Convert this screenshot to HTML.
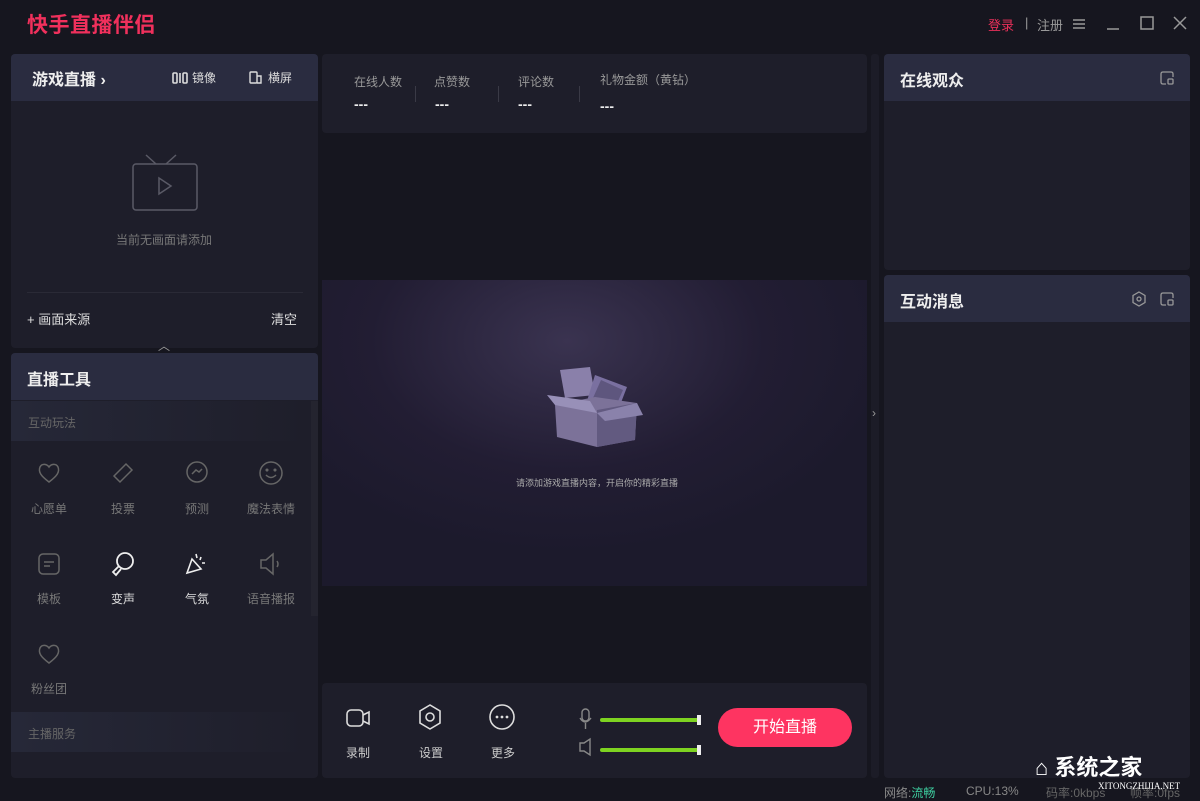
<!DOCTYPE html>
<html><head><meta charset="utf-8"><style>
*{margin:0;padding:0;box-sizing:border-box}
body{width:1200px;height:801px;background:#16161f;font-family:"Liberation Sans","Noto Sans CJK SC",sans-serif;color:#ccc;position:relative;overflow:hidden}
.a{position:absolute}
.panel{position:absolute;background:#1e1e2a;border-radius:4px;overflow:hidden}
.hd{position:absolute;left:0;right:0;top:0;height:47px;background:#2a2c40}
.t{font-size:16px;font-weight:bold;color:#eee}
.s{font-size:12px;color:#888}
svg{position:absolute;fill:none}
.tool{position:absolute;width:74px;text-align:center;font-size:12px;color:#777}
</style></head><body>
<div class="a" style="left:27px;top:9px;font-size:21px;font-weight:bold;color:#f0305c;letter-spacing:0.5px">快手直播伴侣</div>
<div class="a" style="left:988px;top:15px;font-size:13px;color:#e8305a">登录</div>
<div class="a" style="left:1025px;top:15px;font-size:13px;color:#999">|</div>
<div class="a" style="left:1037px;top:15px;font-size:13px;color:#999">注册</div>
<svg style="left:1072px;top:17px" width="14" height="14" stroke="#999" stroke-width="1.5"><path d="M1 3H13M1 7H13M1 11H13"/></svg>
<svg style="left:1106px;top:17px" width="14" height="14" stroke="#999" stroke-width="1.5"><path d="M1 12H13"/></svg>
<svg style="left:1140px;top:16px" width="14" height="14" stroke="#999" stroke-width="1.5"><rect x="1" y="1" width="12" height="12"/></svg>
<svg style="left:1173px;top:16px" width="14" height="14" stroke="#999" stroke-width="1.5"><path d="M1 1L13 13M13 1L1 13"/></svg>

<!-- left top -->
<div class="panel" style="left:11px;top:54px;width:307px;height:294px">
<div class="hd"></div>
<div class="a t" style="left:21px;top:12px">游戏直播 ›</div>
<svg style="left:161px;top:18px" width="16" height="12" stroke="#ddd" stroke-width="1.6"><rect x="1" y="1" width="4" height="10" rx="1"/><path d="M8 1V11"/><rect x="11" y="1" width="4" height="10" rx="1"/></svg>
<div class="a" style="left:181px;top:15px;font-size:12px;color:#ddd">镜像</div>
<svg style="left:238px;top:17px" width="13" height="13" stroke="#ddd" stroke-width="1.4"><rect x="1" y="1" width="7" height="11" rx="1"/><path d="M8 5H12V12H8"/></svg>
<div class="a" style="left:257px;top:15px;font-size:12px;color:#ddd">横屏</div>
<svg style="left:120px;top:98px" width="70" height="62" stroke="#5a5a66" stroke-width="1.5"><path d="M15 3L25 12M45 3L35 12"/><rect x="2" y="12" width="64" height="46" rx="3"/><path d="M28 26L28 42L40 34Z"/></svg>
<div class="a s" style="left:105px;top:177px;color:#777">当前无画面请添加</div>
<div class="a" style="left:16px;top:238px;width:276px;height:1px;background:#2a2a36"></div>
<div class="a" style="left:16px;top:255px;font-size:13px;color:#ddd">+ 画面来源</div>
<div class="a" style="left:260px;top:255px;font-size:13px;color:#ddd">清空</div>
</div>
<div class="a" style="left:158px;top:337px;font-size:12px;color:#999">︿</div>

<!-- tools -->
<div class="panel" style="left:11px;top:353px;width:307px;height:425px">
<div class="hd"></div>
<div class="a t" style="left:16px;top:13px">直播工具</div>
<div class="a" style="left:0;top:48px;width:300px;height:40px;background:linear-gradient(90deg,#262838,#1e1e2a)"></div>
<div class="a s" style="left:17px;top:61px;color:#666">互动玩法</div>
<div class="a" style="left:0;top:359px;width:300px;height:40px;background:linear-gradient(90deg,#262838,#1e1e2a)"></div>
<div class="a s" style="left:17px;top:372px;color:#666">主播服务</div>
<div class="a" style="left:300px;top:48px;width:7px;height:215px;background:#24242f"></div>
</div>
<div class="tool" style="left:12px;top:500px">心愿单</div>
<div class="tool" style="left:86px;top:500px">投票</div>
<div class="tool" style="left:160px;top:500px">预测</div>
<div class="tool" style="left:234px;top:500px">魔法表情</div>
<div class="tool" style="left:12px;top:590px">模板</div>
<div class="tool" style="left:86px;top:590px;color:#ddd">变声</div>
<div class="tool" style="left:160px;top:590px;color:#ddd">气氛</div>
<div class="tool" style="left:234px;top:590px">语音播报</div>
<div class="tool" style="left:12px;top:680px">粉丝团</div>
<svg style="left:36px;top:460px" width="26" height="26" stroke="#666" stroke-width="1.5"><path d="M13 22C5 16 2 12 4 7C6 3 11 4 13 7C15 4 20 3 22 7C24 12 21 16 13 22Z"/></svg>
<svg style="left:110px;top:460px" width="26" height="26" stroke="#666" stroke-width="1.5"><path d="M4 16L16 4L22 10L10 22Z"/></svg>
<svg style="left:184px;top:460px" width="26" height="26" stroke="#666" stroke-width="1.5"><circle cx="13" cy="12" r="10"/><path d="M8 14L12 10L15 12L18 9"/></svg>
<svg style="left:258px;top:460px" width="26" height="26" stroke="#666" stroke-width="1.5"><circle cx="13" cy="13" r="11"/><path d="M8 15Q13 20 18 15"/><circle cx="9" cy="10" r=".8"/><circle cx="17" cy="10" r=".8"/></svg>
<svg style="left:36px;top:551px" width="26" height="26" stroke="#666" stroke-width="1.5"><rect x="3" y="3" width="20" height="20" rx="4"/><path d="M8 11H18M8 15H14"/></svg>
<svg style="left:110px;top:551px" width="26" height="26" stroke="#eee" stroke-width="1.8"><circle cx="15" cy="10" r="8"/><path d="M9 15L3 21L6 24L11 18"/></svg>
<svg style="left:184px;top:551px" width="26" height="26" stroke="#eee" stroke-width="1.6"><path d="M3 22L8 8L17 18Z M12 3L13 7M17 6L16 9M21 12L18 12"/></svg>
<svg style="left:258px;top:551px" width="26" height="26" stroke="#666" stroke-width="1.5"><path d="M3 9H8L15 3V23L8 17H3Z M19 10Q21 13 19 16"/></svg>
<svg style="left:36px;top:641px" width="26" height="26" stroke="#666" stroke-width="1.5"><path d="M13 22C5 16 2 12 4 7C6 3 11 4 13 7C15 4 20 3 22 7C24 12 21 16 13 22Z"/></svg>

<!-- center stats -->
<div class="panel" style="left:322px;top:54px;width:545px;height:79px">
<div class="a s" style="left:32px;top:19px;color:#999">在线人数</div>
<div class="a s" style="left:112px;top:19px;color:#999">点赞数</div>
<div class="a s" style="left:196px;top:19px;color:#999">评论数</div>
<div class="a s" style="left:278px;top:17px;color:#999">礼物金额（黄钻）</div>
<div class="a" style="left:93px;top:32px;width:1px;height:16px;background:#3a3a46"></div>
<div class="a" style="left:176px;top:32px;width:1px;height:16px;background:#3a3a46"></div>
<div class="a" style="left:257px;top:32px;width:1px;height:16px;background:#3a3a46"></div>
<div class="a" style="left:32px;top:42px;font-size:14px;font-weight:bold;color:#eee">---</div>
<div class="a" style="left:113px;top:42px;font-size:14px;font-weight:bold;color:#eee">---</div>
<div class="a" style="left:196px;top:42px;font-size:14px;font-weight:bold;color:#eee">---</div>
<div class="a" style="left:278px;top:44px;font-size:14px;font-weight:bold;color:#eee">---</div>
</div>
<div class="a" style="left:322px;top:280px;width:545px;height:306px;background:radial-gradient(ellipse 60% 70% at 45% 20%,#3a3350,#221d33 60%,#1c1a2c)"></div>
<svg style="left:545px;top:365px" width="100" height="85"><path d="M15 5L45 2L50 30L20 33Z" fill="#8a80aa"/><path d="M50 10L82 22L72 48L42 36Z" fill="#7a70a0"/><path d="M56 15L78 25L70 43L48 33Z" fill="#5e567e"/><path d="M10 40L50 32L92 38L90 75L52 82L12 72Z" fill="#7c7299"/><path d="M52 45L92 38L90 75L52 82Z" fill="#625a80"/><path d="M2 30L10 40L52 48L45 36Z" fill="#9890b8"/><path d="M52 48L92 38L98 50L60 56Z" fill="#8a82ab"/></svg>
<div class="a" style="left:516px;top:476px;font-size:9px;color:#aaa">请添加游戏直播内容，开启你的精彩直播</div>

<!-- bottom controls -->
<div class="panel" style="left:322px;top:683px;width:545px;height:95px">
<svg style="left:22px;top:22px" width="28" height="26" stroke="#ddd" stroke-width="1.6"><rect x="3" y="5" width="16" height="16" rx="4"/><path d="M19 10L25 7V19L19 16"/></svg>
<svg style="left:94px;top:20px" width="28" height="28" stroke="#ddd" stroke-width="1.6"><path d="M14 2L24 8V20L14 26L4 20V8Z"/><circle cx="14" cy="14" r="4"/></svg>
<svg style="left:166px;top:20px" width="28" height="28" stroke="#ddd" stroke-width="1.6"><circle cx="14" cy="14" r="12"/><circle cx="9" cy="14" r=".6" fill="#ddd"/><circle cx="14" cy="14" r=".6" fill="#ddd"/><circle cx="19" cy="14" r=".6" fill="#ddd"/></svg>
<div class="a" style="left:24px;top:61px;font-size:12px;color:#ccc">录制</div>
<div class="a" style="left:97px;top:61px;font-size:12px;color:#ccc">设置</div>
<div class="a" style="left:169px;top:61px;font-size:12px;color:#ccc">更多</div>
<svg style="left:256px;top:25px" width="16" height="22" stroke="#888" stroke-width="1.4"><rect x="4" y="1" width="7" height="12" rx="3.5"/><path d="M2 10Q7 18 13 10M7.5 15V21"/></svg>
<svg style="left:256px;top:54px" width="16" height="20" stroke="#888" stroke-width="1.4"><path d="M2 6H6L12 2V18L6 14H2Z"/></svg>
<div class="a" style="left:278px;top:35px;width:100px;height:4px;background:#7ed321;border-radius:2px"></div>
<div class="a" style="left:375px;top:32px;width:4px;height:10px;background:#eee"></div>
<div class="a" style="left:278px;top:65px;width:100px;height:4px;background:#7ed321;border-radius:2px"></div>
<div class="a" style="left:375px;top:62px;width:4px;height:10px;background:#eee"></div>
<div class="a" style="left:396px;top:25px;width:134px;height:39px;background:#fe3461;border-radius:20px;color:#fff;font-size:16px;text-align:center;line-height:39px">开始直播</div>
</div>

<!-- splitter -->
<div class="a" style="left:871px;top:54px;width:8px;height:724px;background:#1c1c27;border-radius:3px"></div>
<div class="a" style="left:872px;top:406px;font-size:12px;color:#999">›</div>

<!-- right -->
<div class="panel" style="left:884px;top:54px;width:306px;height:216px">
<div class="hd"></div>
<div class="a t" style="left:16px;top:13px">在线观众</div>
<svg style="left:276px;top:17px" width="14" height="14" stroke="#999" stroke-width="1.3"><path d="M13 6V3Q13 1 11 1H3Q1 1 1 3V11Q1 13 3 13H6"/><rect x="8" y="8" width="5" height="5" rx="1"/></svg>
</div>
<div class="panel" style="left:884px;top:275px;width:306px;height:503px">
<div class="hd"></div>
<div class="a t" style="left:16px;top:13px">互动消息</div>
<svg style="left:247px;top:16px" width="16" height="16" stroke="#999" stroke-width="1.3"><path d="M8 1L14 4.5V11.5L8 15L2 11.5V4.5Z"/><circle cx="8" cy="8" r="2"/></svg>
<svg style="left:276px;top:17px" width="14" height="14" stroke="#999" stroke-width="1.3"><path d="M13 6V3Q13 1 11 1H3Q1 1 1 3V11Q1 13 3 13H6"/><rect x="8" y="8" width="5" height="5" rx="1"/></svg>
</div>

<!-- status -->
<div class="a" style="left:884px;top:784px;font-size:12px;color:#888">网络:<span style="color:#3ecfa0">流畅</span></div>
<div class="a" style="left:966px;top:784px;font-size:12px;color:#888">CPU:13%</div>
<div class="a" style="left:1046px;top:784px;font-size:12px;color:#666">码率:0kbps</div>
<div class="a" style="left:1130px;top:784px;font-size:12px;color:#666">帧率:0fps</div>
<div class="a" style="left:1035px;top:750px;font-size:22px;font-weight:bold;color:#fff">⌂ 系统之家</div>
<div class="a" style="left:1098px;top:781px;font-size:9px;color:#fff;font-family:'Liberation Serif',serif">XITONGZHIJIA.NET</div>
</body></html>
